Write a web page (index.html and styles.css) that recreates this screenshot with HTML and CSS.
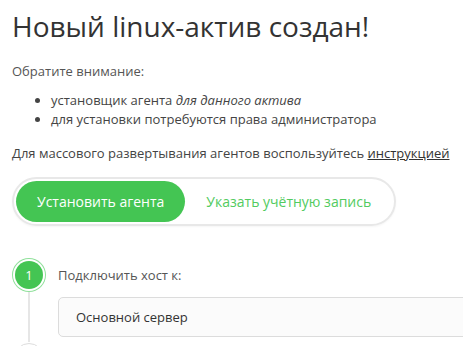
FILE: index.html
```html
<!DOCTYPE html>
<html lang="ru">
<head>
<meta charset="utf-8" />
<title>Новый актив</title>
<link rel="stylesheet" href="styles.css">
</head>
<body>
<div class="container">
  <h1 class="title">Новый linux-актив создан!</h1>
  <p class="note">Обратите внимание:</p>
  <ul class="note-list">
    <li>установщик агента <em>для данного актива</em></li>
    <li>для установки потребуются права администратора</li>
  </ul>
  <p class="hint">Для массового развертывания агентов воспользуйтесь <a href="#" class="hint-link">инструкцией</a></p>

  <div class="switch">
    <button class="switch-btn active">Установить агента</button>
    <button class="switch-btn">Указать учётную запись</button>
  </div>

  <div class="steps">
    <div class="step">
      <div class="step-rail">
        <span class="step-num">1</span>
        <span class="step-line"></span>
      </div>
      <div class="step-body">
        <div class="step-label">Подключить хост к:</div>
        <div class="field">Основной сервер</div>
      </div>
    </div>
    <div class="step">
      <div class="step-rail">
        <span class="step-num todo"></span>
      </div>
      <div class="step-body"></div>
    </div>
  </div>
</div>
</body>
</html>
```

FILE: styles.css
```css
html, body {
  overflow: hidden;
}
body {
  margin: 0;
  font-family: "Open Sans", Arial, sans-serif;
  color: #444;
  background: #fff;
}
.container {
  padding: 9px 0 0 12px;
}
.title {
  margin: 0;
  font-size: 28px;
  line-height: 34px;
  font-weight: 400;
  color: #333;
}
.note {
  margin: 19px 0 0;
  font-size: 13px;
  line-height: 18px;
  color: #555;
}
.note-list {
  margin: 11px 0 0;
  padding-left: 39px;
  font-size: 13px;
  line-height: 19px;
  color: #444;
}
.hint {
  margin: 15px 0 0;
  font-size: 13px;
  line-height: 18px;
  color: #444;
}
.hint-link {
  color: #333;
  text-decoration: underline;
}
.switch {
  display: inline-flex;
  margin-top: 15px;
  padding: 2px;
  border: 2px solid #e8e8e8;
  border-radius: 26px;
  box-shadow: 0 1px 2px rgba(0,0,0,0.04);
}
.switch-btn {
  height: 41px;
  padding: 0 21px;
  border: none;
  border-radius: 21px;
  background: transparent;
  font-family: "Open Sans", Arial, sans-serif;
  font-size: 14px;
  color: #52cb60;
  cursor: pointer;
}
.switch-btn.active {
  background: #44c553;
  color: #fff;
}
.steps {
  margin-top: 33px;
}
.step {
  display: grid;
  grid-template-columns: 34px 1fr;
  column-gap: 12px;
}
.step-rail {
  display: flex;
  flex-direction: column;
  align-items: center;
}
.step-num {
  box-sizing: border-box;
  width: 28px;
  height: 28px;
  margin: 2px;
  border-radius: 50%;
  background: #44c553;
  color: #fff;
  font-size: 13px;
  line-height: 28px;
  text-align: center;
  box-shadow: 0 0 0 2px #fff, 0 0 0 3px #8fe09a;
}
.step-num.todo {
  width: 30px;
  height: 30px;
  margin: 1px;
  background: #fff;
  border: 1px solid #ddd;
  box-shadow: none;
}
.step-line {
  flex: 1;
  width: 2px;
  margin-top: 1px;
  background: #e6e6e6;
}
.step-body {
  padding-bottom: 5px;
}
.step-label {
  height: 32px;
  line-height: 32px;
  font-size: 13px;
  color: #555;
}
.field {
  box-sizing: border-box;
  width: 430px;
  height: 40px;
  margin-top: 6px;
  padding-left: 17px;
  border: 1px solid #dcdcdc;
  border-radius: 5px;
  background: #fbfbfb;
  font-size: 13px;
  line-height: 38px;
  color: #333;
}
```
